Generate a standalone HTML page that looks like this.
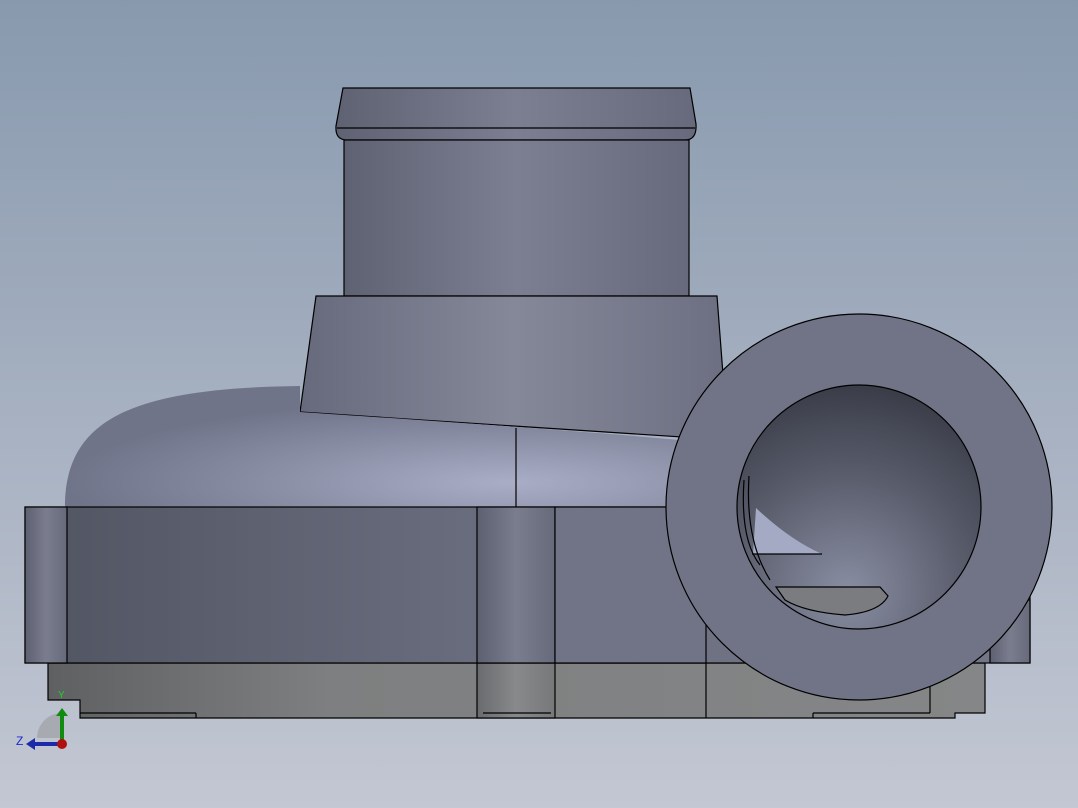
<!DOCTYPE html>
<html><head><style>html,body{margin:0;padding:0;width:1078px;height:808px;overflow:hidden}</style></head>
<body>
<svg width="1078" height="808" viewBox="0 0 1078 808" xmlns="http://www.w3.org/2000/svg">
<defs>
<linearGradient id="bg" x1="0" y1="0" x2="0" y2="1"><stop offset="0" stop-color="#8899ae"/><stop offset="1" stop-color="#c3c7d3"/></linearGradient>
<linearGradient id="cyl" x1="0" y1="0" x2="1" y2="0"><stop offset="0" stop-color="#5e6272"/><stop offset="0.5" stop-color="#7c7f92"/><stop offset="1" stop-color="#676a7c"/></linearGradient>
<linearGradient id="cone" x1="0" y1="0" x2="1" y2="0"><stop offset="0" stop-color="#676a7c"/><stop offset="0.5" stop-color="#858899"/><stop offset="1" stop-color="#6c6f81"/></linearGradient>
<linearGradient id="body" x1="0" y1="0" x2="1" y2="0"><stop offset="0" stop-color="#515562"/><stop offset="0.5" stop-color="#6c6f80"/><stop offset="1" stop-color="#737688"/></linearGradient>
<radialGradient id="vol" cx="0.7" cy="0.8" r="0.7"><stop offset="0" stop-color="#a9adc6"/><stop offset="1" stop-color="#707489"/></radialGradient>
<linearGradient id="base" x1="0" y1="0" x2="1" y2="0"><stop offset="0" stop-color="#5f6062"/><stop offset="0.3" stop-color="#7d7f80"/><stop offset="1" stop-color="#858687"/></linearGradient>
<radialGradient id="hole" cx="0.45" cy="0.85" r="0.85"><stop offset="0" stop-color="#8a8ea3"/><stop offset="0.55" stop-color="#5a5e6d"/><stop offset="1" stop-color="#3a3d48"/></radialGradient>
<linearGradient id="post" x1="0" y1="0" x2="1" y2="0"><stop offset="0" stop-color="#5d6070"/><stop offset="0.5" stop-color="#7a7d8e"/><stop offset="1" stop-color="#676a7b"/></linearGradient>
<linearGradient id="bpost" x1="0" y1="0" x2="1" y2="0"><stop offset="0" stop-color="#6a6b6e"/><stop offset="0.5" stop-color="#88898b"/><stop offset="1" stop-color="#77787a"/></linearGradient>
</defs>
<rect width="1078" height="808" fill="url(#bg)"/>
<g stroke="#000" stroke-width="1.2">
<path d="M343,88 L690,88 L696,124 Q697,140 685,140 L347,140 Q335,140 336,126 Z" fill="url(#cyl)"/>
<path d="M337,128 L695,128" fill="none"/>
<rect x="344" y="140" width="345" height="156" fill="url(#cyl)"/>
<path d="M316,296 L717,296 L728,440 L300,412 Z" fill="url(#cone)"/>
<path d="M65,507 C65,420 130,388 300,386 L300,412 C420,420 600,432 700,442 L700,507 Z" fill="url(#vol)" stroke="none"/>
<line x1="516" y1="428" x2="516" y2="507"/>
<path d="M48,663 L985,663 L985,713 L955,713 L955,718 L80,718 L80,700 L48,700 Z" fill="url(#base)"/>
<rect x="477" y="663" width="78" height="55" fill="url(#bpost)"/>
<line x1="80" y1="713" x2="196" y2="713"/><line x1="196" y1="713" x2="196" y2="718"/>
<line x1="483" y1="713" x2="551" y2="713"/>
<line x1="813" y1="713" x2="930" y2="713"/><line x1="813" y1="713" x2="813" y2="718"/>
<line x1="930" y1="672" x2="930" y2="713"/>
<line x1="706" y1="663" x2="706" y2="718"/>
<rect x="25" y="507" width="1005" height="156" fill="url(#body)"/>
<rect x="25" y="507" width="42" height="156" fill="url(#post)"/>
<rect x="477" y="507" width="78" height="156" fill="url(#post)"/>
<rect x="555" y="507" width="151" height="156" fill="#717487"/>
<rect x="990" y="600" width="40" height="63" fill="url(#post)"/>
<circle cx="859" cy="507" r="193" fill="#717486"/>
<circle cx="859" cy="507" r="122" fill="url(#hole)"/>
<path d="M756,508 Q790,540 822,554 L753,554 Z" fill="#a5aac4" stroke="none"/>
<line x1="752" y1="554" x2="822" y2="554"/>
<path d="M776,587 L880,587 L888,596 Q880,612 845,615 Q805,612 785,600 Z" fill="#7a7c80"/>
<path d="M744,480 Q740,540 760,565" fill="none"/>
<path d="M749,476 Q745,540 770,580" fill="none"/>
</g>
<path d="M37,738 A25,25 0 0 1 62,713 L62,738 Z" fill="#a8aab2"/>
<line x1="62" y1="744" x2="32" y2="744" stroke="#1b2aa8" stroke-width="4"/>
<path d="M26,744 L35,738 L35,750 Z" fill="#1b2aa8"/>
<line x1="62" y1="744" x2="62" y2="714" stroke="#118c11" stroke-width="4"/>
<path d="M62,708 L56,716 L68,716 Z" fill="#118c11"/>
<circle cx="62" cy="744" r="5" fill="#b01010"/>
<text x="16" y="745" font-family="Liberation Sans, sans-serif" font-size="12" fill="#1a2ad0">Z</text>
<text x="58" y="698" font-family="Liberation Sans, sans-serif" font-size="10" fill="#20d020">Y</text>
</svg>
</body></html>
